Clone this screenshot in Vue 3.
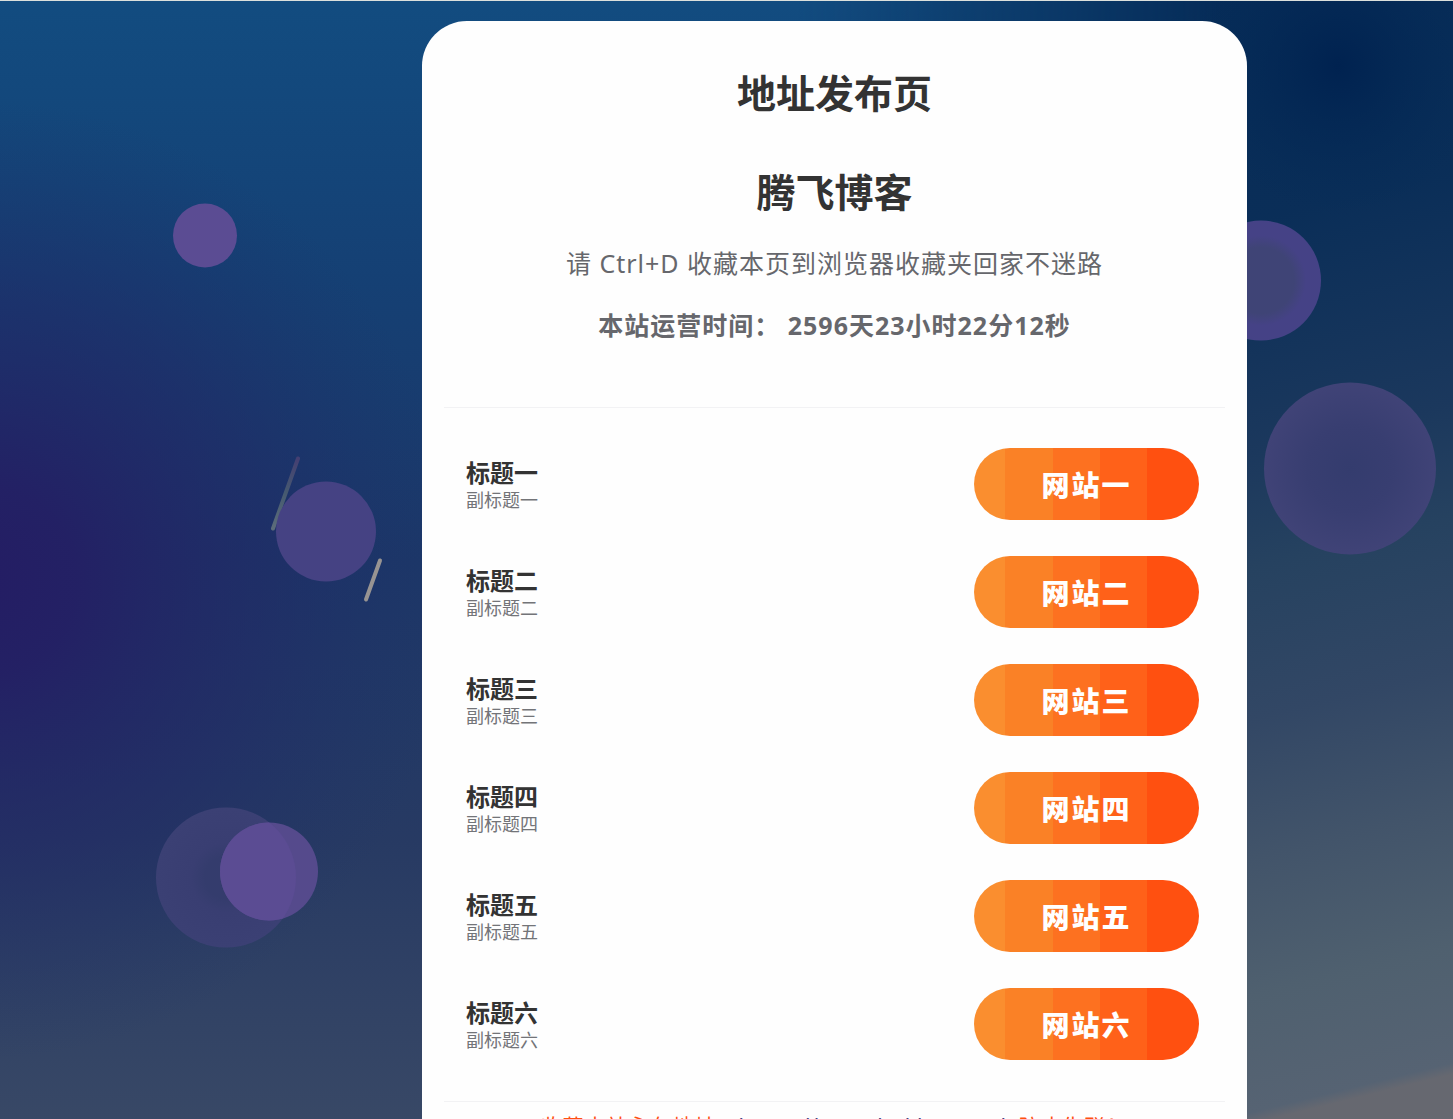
<script setup>
const numerals = ['一', '二', '三', '四', '五', '六']
const sites = numerals.map((n) => ({
  title: `标题${n}`,
  subtitle: `副标题${n}`,
  action: `网站${n}`,
}))
const uptime = '2596天23小时22分12秒'
</script>

<template>
  <div class="page">
    <svg class="sky" viewBox="0 0 1453 1119" preserveAspectRatio="xMidYMid slice" aria-hidden="true">
      <defs>
        <linearGradient id="base" x1="0" y1="0" x2="0" y2="1">
          <stop offset="0" stop-color="#124c80" />
          <stop offset="0.25" stop-color="#154074" />
          <stop offset="0.5" stop-color="#1c3768" />
          <stop offset="0.75" stop-color="#273a63" />
          <stop offset="1" stop-color="#384866" />
        </linearGradient>
        <radialGradient id="violet" gradientUnits="userSpaceOnUse" cx="-20" cy="580" r="480">
          <stop offset="0" stop-color="#241d64" />
          <stop offset="0.2" stop-color="#241e64" stop-opacity="0.9" />
          <stop offset="0.6" stop-color="#212766" stop-opacity="0.5" />
          <stop offset="1" stop-color="#1c3068" stop-opacity="0" />
        </radialGradient>
        <linearGradient id="east" gradientUnits="userSpaceOnUse" x1="1210" y1="0" x2="1480" y2="1090">
          <stop offset="0" stop-color="#062c58" />
          <stop offset="0.2" stop-color="#0a2e58" />
          <stop offset="0.4" stop-color="#1b385d" />
          <stop offset="0.5" stop-color="#264260" />
          <stop offset="0.63" stop-color="#324765" />
          <stop offset="0.75" stop-color="#42546a" />
          <stop offset="0.87" stop-color="#4f606f" />
          <stop offset="0.97" stop-color="#566373" />
          <stop offset="0.98" stop-color="#666870" />
        </linearGradient>
        <linearGradient id="fade" x1="0" y1="0" x2="1" y2="0">
          <stop offset="0.55" stop-color="#000" />
          <stop offset="0.84" stop-color="#fff" />
        </linearGradient>
        <mask id="eastMask">
          <rect width="1453" height="1119" fill="url(#fade)" />
        </mask>
        <radialGradient id="night" gradientUnits="userSpaceOnUse" cx="1338" cy="65" r="150">
          <stop offset="0" stop-color="#002250" />
          <stop offset="1" stop-color="#042a56" stop-opacity="0" />
        </radialGradient>
        <radialGradient id="orb">
          <stop offset="0.55" stop-color="#3f4476" />
          <stop offset="0.75" stop-color="#454286" />
        </radialGradient>
        <radialGradient id="pale">
          <stop offset="0" stop-color="#343c6e" />
          <stop offset="0.5" stop-color="#383e71" />
          <stop offset="1" stop-color="#404377" />
        </radialGradient>
        <radialGradient id="faint">
          <stop offset="0.3" stop-color="#343c6d" />
          <stop offset="0.5" stop-color="#393e72" />
          <stop offset="1" stop-color="#3b4074" />
        </radialGradient>
        <linearGradient id="trail" gradientUnits="userSpaceOnUse" x1="298" y1="458" x2="273" y2="528">
          <stop offset="0" stop-color="#443f72" />
          <stop offset="0.5" stop-color="#465a70" />
          <stop offset="1" stop-color="#5c6c7a" />
        </linearGradient>
        <clipPath id="overlap">
          <circle cx="226" cy="877" r="70" />
        </clipPath>
      </defs>
      <rect width="1453" height="1119" fill="url(#base)" />
      <rect width="1453" height="1119" fill="url(#violet)" />
      <rect width="1453" height="1119" fill="url(#east)" mask="url(#eastMask)" />
      <rect width="1453" height="1119" fill="url(#night)" />
      <line x1="298" y1="458" x2="273" y2="528" stroke="url(#trail)" stroke-width="4" stroke-linecap="round" />
      <circle cx="205" cy="235" r="32" fill="#5b4c93" />
      <circle cx="326" cy="531" r="50" fill="#454283" />
      <line x1="380" y1="560" x2="366" y2="599" stroke="#989492" stroke-width="4" stroke-linecap="round" />
      <circle cx="226" cy="877" r="70" fill="url(#faint)" />
      <circle cx="269" cy="871" r="49" fill="#554a8c" />
      <circle cx="269" cy="871" r="49" fill="#5b4c93" clip-path="url(#overlap)" />
      <circle cx="1261" cy="280" r="60" fill="url(#orb)" />
      <circle cx="1350" cy="468" r="86" fill="url(#pale)" />
    </svg>

    <main class="card">
      <header class="intro">
        <h1>地址发布页</h1>
        <h1>腾飞博客</h1>
        <p>请 Ctrl+D 收藏本页到浏览器收藏夹回家不迷路</p>
        <p class="uptime">本站运营时间： {{ uptime }}</p>
      </header>

      <ul class="sites">
        <li v-for="site in sites" :key="site.title">
          <div class="label">
            <h2>{{ site.title }}</h2>
            <span>{{ site.subtitle }}</span>
          </div>
          <a class="visit" href="#">{{ site.action }}</a>
        </li>
      </ul>

      <footer>
        收藏本站永久地址：<a href="#">https://www.bokho.com/</a>&nbsp; 防止失联！
      </footer>
    </main>
  </div>
</template>

<style>
body {
  margin: 0;
}
</style>

<style scoped>
.page {
  box-sizing: border-box;
  position: relative;
  display: grid;
  grid-template-columns: 422fr minmax(auto, 825px) 206fr;
  align-items: start;
  height: 100vh;
  overflow-y: auto;
  scrollbar-width: none;
  padding-top: 20px;
  border-top: 1px solid #dce0dc;
  background: #1c3768;
  font-family: "Noto Sans", "Noto Sans CJK SC", sans-serif;
  color: #333;
}

.sky {
  position: absolute;
  inset: 0;
  width: 100%;
  height: 100%;
}

.card {
  position: relative;
  grid-column: 2;
  box-sizing: border-box;
  padding: 42px 22px 24px;
  border-radius: 45px;
  background: #fefefe;
}

.intro {
  padding-bottom: 64px;
  border-bottom: 1px solid #f2f2f4;
  text-align: center;
}

h1,
h2,
p {
  margin: 0;
}

h1 {
  margin-bottom: 40px;
  font-size: 39px;
  line-height: 59px;
}

h1 + h1 {
  margin-bottom: 24px;
}

p {
  color: #66676c;
  font-size: 25px;
  line-height: 36px;
  letter-spacing: 1px;
}

.uptime {
  margin-top: 26px;
  font-weight: 700;
}

.sites {
  display: flex;
  flex-direction: column;
  gap: 36px;
  margin: 0;
  padding: 40px 26px 41px 22px;
  border-bottom: 1px solid #f2f2f4;
  list-style: none;
}

.sites li {
  display: flex;
  align-items: center;
  justify-content: space-between;
  height: 72px;
}

.label {
  display: flex;
  flex-direction: column;
  padding-top: 4px;
}

h2 {
  font-size: 24px;
  line-height: 28px;
}

.label span {
  color: #737478;
  font-size: 18px;
  line-height: 26px;
}

.visit {
  box-sizing: border-box;
  width: 225px;
  height: 72px;
  padding-top: 2px;
  border-radius: 36px;
  background: linear-gradient(
    90deg,
    #fa8e2f 14%,
    #fa8126 14% 35%,
    #fd7120 35% 56%,
    #ff6119 56% 77%,
    #ff5010 77%
  );
  color: #fff;
  font-size: 28px;
  font-weight: 900;
  line-height: 70px;
  letter-spacing: 2px;
  text-align: center;
  text-decoration: none;
}

footer {
  padding-top: 9px;
  color: #ff5010;
  font-size: 21px;
  line-height: 30px;
  letter-spacing: 1px;
  text-align: center;
}

footer a {
  color: #454283;
  text-decoration: none;
}
</style>
